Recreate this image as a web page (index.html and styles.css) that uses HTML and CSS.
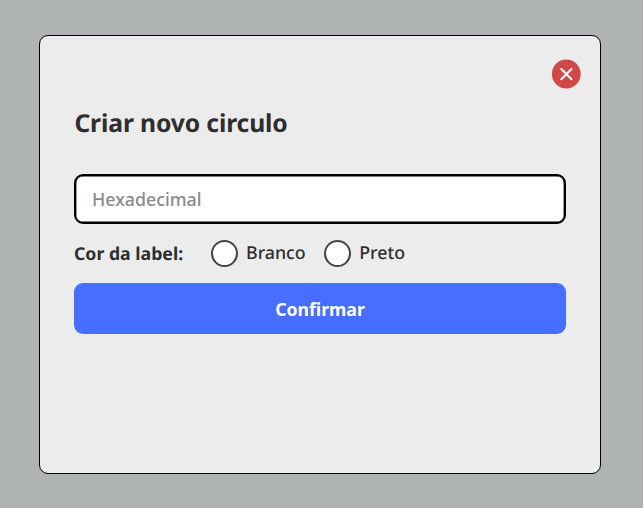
FILE: index.html
```html
<!DOCTYPE html>
<html lang="pt-BR">
<head>
<meta charset="utf-8">
<title>Criar novo circulo</title>
<link rel="stylesheet" href="styles.css">
</head>
<body>
<main class="modal">
  <button class="close" type="button" aria-label="Fechar">
    <svg viewBox="0 0 30 30"><circle cx="15.3" cy="15" r="14.4"/><path d="M10.3 10l10.2 10.2M20.5 10L10.3 20.2"/></svg>
  </button>
  <h1 class="title">Criar novo circulo</h1>
  <form class="form">
    <input class="field" type="text" placeholder="Hexadecimal">
    <div class="options">
      <span class="legend">Cor da label:</span>
      <label class="option"><input class="radio" type="radio" name="cor">Branco</label>
      <label class="option"><input class="radio" type="radio" name="cor">Preto</label>
    </div>
    <button class="confirm" type="button">Confirmar</button>
  </form>
</main>
</body>
</html>
```
FILE: styles.css
```css
* { box-sizing: border-box; }
body {
  margin: 0;
  height: 508px;
  padding: 35px 42px 34px 39px;
  background: #afb3b4;
  color: #2e2e2e;
  font-family: "Noto Sans", sans-serif;
  text-rendering: geometricPrecision;
}
.modal {
  display: flex;
  flex-direction: column;
  height: 439px;
  padding: 23px 34px 0;
  background: #ececec;
  border: 1px solid #000;
  border-radius: 9px;
}
.close {
  align-self: flex-end;
  width: 30px;
  height: 30px;
  margin-right: -15px;
  padding: 0;
  border: 0;
  background: none;
}
.close svg { display: block; width: 30px; height: 30px; }
.close circle { fill: #d04848; }
.close path { fill: none; stroke: #fff; stroke-width: 2; stroke-linecap: round; }
.title { margin: 17px 0 0 0.4px; font-size: 24.7px; line-height: 36px; font-weight: 700; letter-spacing: -0.14px; }
.form { display: flex; flex-direction: column; margin-top: 32px; }
.field {
  width: 100%;
  height: 50px;
  padding: 0 16px;
  border: 2px solid #000;
  border-radius: 9px;
  background: #fff;
  box-shadow: inset 0 0 0 0.4px #000;
  font: 500 17.8px "Noto Sans", sans-serif;
}
.field::placeholder { color: #8a8a8a; opacity: 1; }
.options { display: flex; align-items: center; height: 58px; margin-bottom: 1px; font-size: 17.8px; font-weight: 500; }
.legend { width: 136.5px; font-weight: 700; font-size: 17.7px; padding-top: 2px; }
.option { display: flex; align-items: center; gap: 8.5px; margin-right: 18px; }
.radio {
  appearance: none;
  width: 27px;
  height: 27px;
  margin: 0;
  border: 2px solid #444;
  border-radius: 50%;
  background: #fff;
}
.confirm {
  height: 51px;
  padding: 0;
  border: 0;
  border-radius: 9px;
  background: #476eff;
  color: #fff;
  font: 700 17.7px "Noto Sans", sans-serif;
}
```
